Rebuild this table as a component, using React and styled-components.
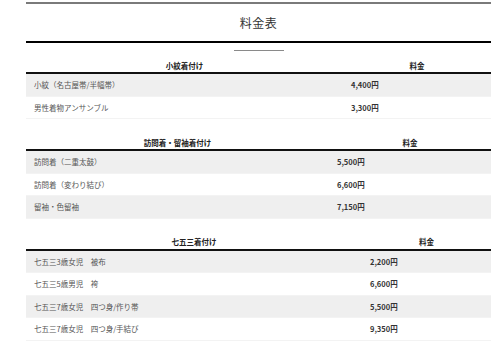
import styled, { createGlobalStyle } from 'styled-components'

const GlobalStyle = createGlobalStyle`
    body {
        margin: 0;
        background: #ffffff;
        font-family: "Noto Sans CJK JP", "Liberation Sans", sans-serif;
    }
`

const Pagina = styled.main`
    width: 465px;
    margin-left: 26px;
    padding-top: 2px;
`

const Cabecalho = styled.header`
    height: 37px;
    display: flex;
    align-items: center;
    justify-content: center;
    border-top: 2px solid #7a7a7a;
    border-bottom: 2px solid #000000;
`

const Titulo = styled.h1`
    margin: 0;
    font-size: 12px;
    font-weight: 400;
    color: #333333;
    letter-spacing: 0.5px;
`

const Traco = styled.div`
    width: 50px;
    height: 1px;
    margin: 7px auto 0;
    background: #8a8a8a;
`

const Tabela = styled.section`
    margin-top: ${p => p.$top}px;
    font-size: 7.5px;
`

const LinhaTopo = styled.div`
    display: grid;
    grid-template-columns: ${p => p.$label}px 1fr;
    height: 14px;
    align-items: center;
    text-align: center;
    font-weight: 700;
    color: #222222;
    border-bottom: 2px solid #111111;
`

const Linha = styled.div`
    display: grid;
    grid-template-columns: ${p => p.$label}px 1fr;
    height: 22.5px;
    box-sizing: border-box;
    align-items: center;
    border-bottom: 1px solid #f3f3f3;

    &:nth-child(even) {
        background: #efefef;
    }
`

const Item = styled.span`
    padding-left: 8px;
    color: #555555;
    white-space: pre;
`

const Preco = styled.span`
    padding-left: 8px;
    font-weight: 700;
    color: #333333;
`

const tabelas = [
    {
        titulo: '小紋着付け',
        label: 317,
        top: 7,
        itens: [
            ['小紋（名古屋帯/半幅帯）', '4,400円'],
            ['男性着物アンサンブル', '3,300円'],
        ],
    },
    {
        titulo: '訪問着・留袖着付け',
        label: 303,
        top: 16,
        itens: [
            ['訪問着（二重太鼓）', '5,500円'],
            ['訪問着（変わり結び）', '6,600円'],
            ['留袖・色留袖', '7,150円'],
        ],
    },
    {
        titulo: '七五三着付け',
        label: 336,
        top: 16,
        itens: [
            ['七五三3歳女児　被布', '2,200円'],
            ['七五三5歳男児　袴', '6,600円'],
            ['七五三7歳女児　四つ身/作り帯', '5,500円'],
            ['七五三7歳女児　四つ身/手結び', '9,350円'],
        ],
    },
]

function App() {
    return (
        <>
            <GlobalStyle />
            <Pagina>
                <Cabecalho>
                    <Titulo>料金表</Titulo>
                </Cabecalho>
                <Traco />
                {tabelas.map((tabela) => (
                    <Tabela key={tabela.titulo} $top={tabela.top}>
                        <LinhaTopo $label={tabela.label}>
                            <span>{tabela.titulo}</span>
                            <span>料金</span>
                        </LinhaTopo>
                        {tabela.itens.map(([nome, preco]) => (
                            <Linha key={nome} $label={tabela.label}>
                                <Item>{nome}</Item>
                                <Preco>{preco}</Preco>
                            </Linha>
                        ))}
                    </Tabela>
                ))}
            </Pagina>
        </>
    )
}

export default App
